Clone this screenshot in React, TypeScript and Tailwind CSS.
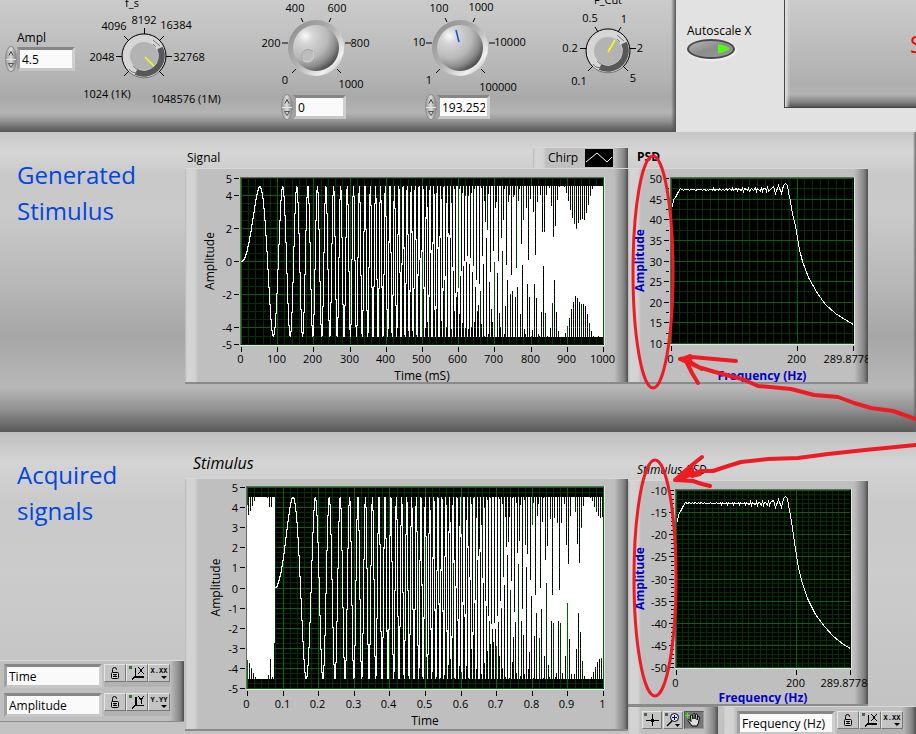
import { useState } from "react"
import type { ReactNode } from "react"
import clsx from "clsx"

type Point = [number, number]
type Tick = { v: number; label: string }

const F_STOP = 193.252
const AMPLITUDE = 4.5

const FRAME =
  "bg-[linear-gradient(to_right,#b8b8b8_0,#d4d4d4_2px,#d2d2d2_10px,#bfbfbf_13px,#bfbfbf_calc(100%_-_14px),#858585_calc(100%_-_4px),#4e4e4e_100%)]"

// linear sweep from 0 to F_STOP over one second, looped after the delay
const sweepTime = (x: number, delay: number) => (Math.max(0, x) - delay + 1) % 1
const chirp = (t: number) => AMPLITUDE * Math.sin(Math.PI * F_STOP * t * t)

// lowest and highest value around every pixel column,
// neighbours overlap more as the sweep gets close to one cycle per two columns
function columns(delay: number, width: number) {
  const steps = 32
  return Array.from({ length: width }, (_, c) => {
    const span = 1 + 0.48 * Math.pow(sweepTime(c / width, delay), 6)
    let low = Infinity
    let high = -Infinity
    for (let s = 0; s <= steps; s++) {
      const v = chirp(sweepTime((c - span / 2 + (s / steps) * span) / width, delay))
      low = Math.min(low, v)
      high = Math.max(high, v)
    }
    return [low, high]
  })
}

// power density in dB below the pass band level
function density(level: number): Point[] {
  const points: Point[] = [
    [1, level - 4.3],
    [3, level - 2.5],
    [7, level - 1.8],
    [11, level - 0.5],
    [15, level + 0.2],
  ]
  for (let f = 19; f < 160; f += 2) {
    const ripple = 0.12 + Math.pow(f / 160, 3) * 0.6
    points.push([f, level + ripple * Math.sin(f * 1.9)])
  }
  const tail: Point[] = [
    [162, 0.7], [165, -0.9], [170, 0.9], [175, -0.9], [179, 1], [182, 1.5], [185, 1.1],
    [187, -0.6], [190, -2.8], [193, -5.8], [197, -8.8], [200, -11.8], [204, -14.6],
    [209, -17.4], [219, -21.4], [232, -25.1], [246, -27.8], [262, -30], [278, -31.8], [289.8, -32.8],
  ]
  return [...points, ...tail.map(([f, d]): Point => [f, level + d])]
}

const range = (from: number, to: number, step: number) =>
  Array.from({ length: Math.round((to - from) / step) + 1 }, (_, i) => from + i * step)

const ticks = (from: number, to: number, step: number): Tick[] =>
  range(from, to, step).map((v) => ({ v, label: String(Math.round(v * 10) / 10) }))

type ChartProps = {
  name: string
  width: number
  height: number
  plot: { x: number; y: number; w: number; h: number }
  xMax: number
  yMin: number
  yMax: number
  xTicks: Tick[]
  yTicks: Tick[]
  xMajor: number
  yMajor: number
  xMinor: number
  yMinor: number
  minorTicks?: boolean
  points?: Point[]
  chirpDelay?: number
  xLabel: string
  xLabelY: number
  tickLabelY: number
  yLabelX: number
  blue?: boolean
}

function Chart(p: ChartProps) {
  const { plot } = p
  const px = (v: number) => Math.round(plot.x + (v / p.xMax) * plot.w) + 0.5
  const row = (v: number) => Math.round(plot.y + ((p.yMax - v) / (p.yMax - p.yMin)) * plot.h)
  const py = (v: number) => row(v) + 0.5
  const bottom = plot.y + plot.h
  const right = plot.x + plot.w
  const xGrid = range(0, Math.floor(p.xMax / p.xMinor) * p.xMinor, p.xMinor)
  const yGrid = range(p.yMin, p.yMax, p.yMinor)
  const isMajor = (v: number, step: number) => Math.abs(v / step - Math.round(v / step)) < 0.001
  const lines = (major: boolean) =>
    xGrid
      .filter((v) => isMajor(v, p.xMajor) === major)
      .map((v) => `M${px(v)} ${plot.y}V${bottom}`)
      .concat(yGrid.filter((v) => isMajor(v, p.yMajor) === major).map((v) => `M${plot.x} ${py(v)}H${right}`))
      .join("")
  const centerY = plot.y + plot.h / 2

  return (
    <svg
      viewBox={`0 0 ${p.width} ${p.height}`}
      className="block h-auto w-full text-[11px]"
      role="img"
      aria-label={p.name}
    >
      <g shapeRendering="crispEdges" fill="none">
        <rect x={plot.x - 1} y={plot.y - 1} width={plot.w + 3} height={plot.h + 3} fill="#e2e2e2" />
        <path d={`M${plot.x - 1} ${plot.y - 1}h${plot.w + 2}v1h${-plot.w - 1}v${plot.h + 1}h-1z`} fill="#666" />
        <rect x={plot.x} y={plot.y} width={plot.w + 1} height={plot.h + 1} fill="#000" />
        <path d={lines(false)} stroke="#003200" />
        <path d={lines(true)} stroke="#006600" />
        {p.chirpDelay !== undefined && (
          <path
            d={columns(p.chirpDelay, plot.w)
              .map(([low, high], c) => `M${plot.x + c + 0.5} ${row(high)}V${row(low) + 1}`)
              .join("")}
            stroke="#fff"
          />
        )}
        {p.points && <polyline points={p.points.map(([x, y]) => `${px(x)},${py(y)}`).join(" ")} stroke="#fff" />}
        <path
          stroke="#000"
          d={
            p.xTicks.map((t) => `M${px(t.v)} ${bottom + 3}v5`).join("") +
            p.yTicks.map((t) => `M${plot.x - 7} ${py(t.v)}h5`).join("") +
            (p.minorTicks ? yGrid.map((v) => `M${plot.x - 5} ${py(v)}h3`).join("") : "")
          }
        />
      </g>
      <g dominantBaseline="central">
        {p.yTicks.map((t) => (
          <text key={t.v} x={plot.x - 9} y={py(t.v)} textAnchor="end">
            {t.label}
          </text>
        ))}
        {p.xTicks.map((t) => (
          <text
            key={t.v}
            x={t.label.length > 6 ? px(t.v) - 30 : px(t.v) - 1}
            y={p.tickLabelY}
            textAnchor={t.label.length > 6 ? "start" : "middle"}
          >
            {t.label}
          </text>
        ))}
        <g textAnchor="middle" className={p.blue ? "fill-[#0000c8] text-[12px] font-bold" : "text-[12px]"}>
          <text x={plot.x + plot.w / 2} y={p.xLabelY}>
            {p.xLabel}
          </text>
          <text transform={`translate(${p.yLabelX} ${centerY}) rotate(-90)`}>Amplitude</text>
        </g>
      </g>
    </svg>
  )
}

function ChartFrame({ children }: { children: ReactNode }) {
  return <div className={clsx("border-t border-b-2 border-t-[#d8d8d8] border-b-[#8a8a8a]", FRAME)}>{children}</div>
}

function Spinner({ onStep, name }: { onStep: (d: number) => void; name: string }) {
  return (
    <div className="flex h-[26px] w-3 flex-col divide-y divide-[#e8e8e8] overflow-hidden rounded-[50%] border border-[#8c8c8c] bg-linear-to-r from-[#a0a0a0] via-[#dcdcdc] to-[#828282]">
      <button type="button" aria-label={`Increase ${name}`} onClick={() => onStep(1)} className="flex-1">
        <svg viewBox="0 0 10 12" className="mx-auto h-3 w-2.5" fill="none">
          <path d="M3 8.500l2-4 2 4" stroke="#444" />
        </svg>
      </button>
      <button type="button" aria-label={`Decrease ${name}`} onClick={() => onStep(-1)} className="flex-1">
        <svg viewBox="0 0 10 12" className="mx-auto h-3 w-2.5" fill="none">
          <path d="M2.500 3.500h5l-2.500 4z" stroke="#555" />
        </svg>
      </button>
    </div>
  )
}

const FIELD =
  "border-[3px] border-t-[#868686] border-r-[#cfcfcf] border-b-[#c6c6c6] border-l-[#a0a0a0] bg-[#fafafa] px-0.5 text-[12px] leading-4 outline-none"

function NumberField({ id, initial, name, wide }: { id: string; initial: string; name: string; wide?: boolean }) {
  const [value, setValue] = useState(initial)
  return (
    <div className="flex items-center">
      <Spinner name={name} onStep={(d) => setValue(String(Number((Number(value) + d).toFixed(3))))} />
      <input
        id={id}
        aria-label={name}
        value={value}
        onChange={(e) => setValue(e.target.value)}
        className={clsx(FIELD, "h-6", wide ? "w-[58px]" : "w-[53px]")}
      />
    </div>
  )
}

type Label = [string, number, number]

function KnobLabels({ labels }: { labels: Label[] }) {
  return (
    <g textAnchor="middle" dominantBaseline="central">
      {labels.map(([text, x, y]) => (
        <text key={text} x={x} y={y}>
          {text}
        </text>
      ))}
    </g>
  )
}

// flat dial with a dark crescent and a yellow pointer, centred on 0,0
function DialFace({ pointer, tickMarks }: { pointer: string; tickMarks: string }) {
  return (
    <g fill="none">
      <circle r="21.500" fill="#d6d6d6" />
      <path d="M16-8A18 18 0 0 1-8 16" stroke="#585858" strokeWidth="6" />
      <path d="M9-16l7 6M12-9l-3-3M-15 13q2 4 8 4M-11 10q3 3 6 4" stroke="#777" />
      <path d="M-15.500 15.500A22 22 0 0 0 15.500 15.500" stroke="#777" />
      <path d="M-15.500 15.500A22 22 0 1 1 15.500 15.500" stroke="#000" />
      <circle r="14" fill="#b3b3b3" />
      <path d={pointer} stroke="#ffff00" strokeWidth="1.500" />
      <path d={tickMarks} stroke="#000" />
    </g>
  )
}

function BallFace({ children }: { children: ReactNode }) {
  return (
    <>
      <defs>
        <linearGradient id="rim" x1="0.1" y1="0.1" x2="0.9" y2="0.9">
          <stop offset="0" stopColor="#909090" />
          <stop offset="0.5" stopColor="#b4b4b4" />
          <stop offset="0.85" stopColor="#f0f0f0" />
          <stop offset="1" stopColor="#c4c4c4" />
        </linearGradient>
        <radialGradient id="ball" cx="0.27" cy="0.24" r="0.82">
          <stop offset="0" stopColor="#fafafa" />
          <stop offset="0.2" stopColor="#d6d6d6" />
          <stop offset="0.6" stopColor="#b8b8b8" />
          <stop offset="0.82" stopColor="#8c8c8c" />
          <stop offset="1" stopColor="#505050" />
        </radialGradient>
      </defs>
      <circle r="28" fill="url(#rim)" />
      <circle r="23" fill="url(#ball)" />
      {children}
      <path d="M-24 25l4-4M-34-5h6M-15-30l2 4M15-30l-2 4M29-5h6M25 25l-4-4" stroke="#000" />
    </>
  )
}

function LockIcon() {
  return (
    <svg viewBox="0 0 16 16" className="size-4" fill="none" stroke="#000">
      <path d="M5.500 7V4.500a2 2 0 0 1 4 0V5" />
      <rect x="4.500" y="7.500" width="7" height="6" rx="1" fill="#d0d0d0" />
      <path d="M6 9.500h4M6 11.500h4M8 9v3" />
    </svg>
  )
}

function ScaleIcon({ axis }: { axis: "X" | "Y" }) {
  return (
    <svg viewBox="0 0 18 16" className="h-4 w-[18px]" fill="none" stroke="#000" shapeRendering="crispEdges">
      <rect x="1" y="1" width="3" height="3" fill="#3f6b3f" stroke="none" />
      <path d="M7.500 3v9M4 14.500l3-3" />
      <path d="M7 11.500h9" strokeWidth={axis === "X" ? 2 : 1} />
      {axis === "Y" && <path d="M8.500 3v8" />}
      <path d={axis === "X" ? "M10.500 2l5 7M15.500 2l-5 7" : "M10.500 2l2.500 4 2.500-4M13.500 5v5"} />
    </svg>
  )
}

function FormatIcon({ axis }: { axis: "X" | "Y" }) {
  return (
    <svg viewBox="0 0 18 16" className="h-4 w-[18px]">
      <text x="9" y="8" textAnchor="middle" className="font-['Liberation_Mono',monospace] text-[7px] font-bold">
        {axis === "X" ? "X.XX" : "Y.YY"}
      </text>
      <path d="M11 11h6l-3 3z" />
    </svg>
  )
}

type ToolButtonProps = { label: string; active?: boolean; narrow?: boolean; children: ReactNode }

function ToolButton({ label, active, narrow, children }: ToolButtonProps) {
  return (
    <button
      type="button"
      aria-label={label}
      className={clsx(
        "flex h-[18px] items-center justify-center border",
        narrow ? "w-5" : "w-[22px]",
        active
          ? "border-t-[#555] border-r-[#999] border-b-[#999] border-l-[#555] bg-[#777]"
          : "border-t-[#e6e6e6] border-r-[#777] border-b-[#777] border-l-[#e6e6e6] bg-[#c4c4c4]"
      )}
    >
      {children}
    </button>
  )
}

function ScaleLegend({ axis, id, name }: { axis: "X" | "Y"; id: string; name: string }) {
  return (
    <div className="flex items-start">
      <input id={id} aria-label={`${axis} scale name`} defaultValue={name} className={clsx(FIELD, "mr-0.5 h-6 w-[98px]")} />
      <div className="flex h-[23px] items-start bg-[#b2b2b2]">
        <ToolButton label={`Lock ${axis} autoscale`}>
          <LockIcon />
        </ToolButton>
        <ToolButton label={`Autoscale ${axis} once`}>
          <ScaleIcon axis={axis} />
        </ToolButton>
        <ToolButton label={`${axis} scale format`}>
          <FormatIcon axis={axis} />
        </ToolButton>
      </div>
    </div>
  )
}

function GraphTools() {
  return (
    <div className={clsx("flex w-[90px] gap-px border-t border-[#8a8a8a] pt-1 pl-[14px]", FRAME)}>
      <ToolButton label="Cursor" narrow>
        <svg viewBox="0 0 18 16" className="h-4 w-[18px]" stroke="#000" shapeRendering="crispEdges">
          <rect x="1" y="1" width="3" height="3" fill="#3f6b3f" stroke="none" />
          <path d="M9.500 2v12M3 8.500h13M8 7.500h3M8 9.500h3" />
        </svg>
      </ToolButton>
      <ToolButton label="Zoom" narrow>
        <svg viewBox="0 0 18 16" className="h-4 w-[18px]" fill="none" stroke="#000">
          <rect x="1" y="1" width="3" height="3" fill="#3f6b3f" stroke="none" />
          <circle cx="10.500" cy="5.500" r="4" fill="#e8e8ff" />
          <path d="M8 5.500h5M10.500 3v5" stroke="#00a" />
          <path d="M8 9l-5 5" strokeWidth="1.500" />
          <path d="M11 12h5l-2.500 3z" fill="#000" stroke="none" />
        </svg>
      </ToolButton>
      <ToolButton label="Pan" active narrow>
        <svg viewBox="0 0 18 16" className="h-4 w-[18px]" fill="#ddd" stroke="#000">
          <path d="M7 14L3 8.500c0-1.500 1.500-1 3 1L5.500 4c0-1.500 1.500-1.500 2 0L8 7V2.500c0-1.500 2-1.500 2 0V7l.5-4c.2-1.500 2-1 2 0L12 8l1-3c.4-1 2-.5 1.500.5L13.500 11 12 14z" />
          <path d="M0 3.500h5M2.500 1v5" stroke="#3f0" />
        </svg>
      </ToolButton>
    </div>
  )
}

function Controls() {
  return (
    <div className="flex h-[132px] overflow-hidden bg-[linear-gradient(to_right,transparent_calc(100%_-_5px),#555_100%),linear-gradient(to_bottom,#cbcbcb_0,#c4c4c4_25px,#b4b4b4_75px,#a9a9a9_98px,#b4b4b4_113px,#989898_120px,#585858_131px)]">
      <div className="w-20 shrink-0 pt-[30px] pl-[5px]">
        <label htmlFor="ampl" className="block pl-3 text-[12px] leading-4">
          Ampl
        </label>
        <NumberField id="ampl" name="Ampl" initial="4.5" wide />
      </div>
      <svg viewBox="80 0 150 132" className="h-[132px] w-[150px] shrink-0 text-[11px]" role="img" aria-label="f_s knob">
        <g transform="translate(144 56)">
          <DialFace
            pointer="M1 1l9 9"
            tickMarks="M-20 20l5-5M-28 .5h6M-20-20l5 5M.5-28v6M20-20l-5 5M22 .5h6M20 20l-5-5"
          />
        </g>
        <KnobLabels
          labels={[
            ["f_s", 132, 2],
            ["1024 (1K)", 107, 93],
            ["2048", 102, 56],
            ["4096", 114, 25],
            ["8192", 144, 19],
            ["16384", 176, 24],
            ["32768", 189, 56],
            ["1048576 (1M)", 186, 98],
          ]}
        />
      </svg>
      <div className="w-[150px] shrink-0">
        <svg viewBox="230 0 150 94" className="block h-[94px] w-full text-[11px]" role="img" aria-label="Start frequency knob">
          <g transform="translate(316 48)">
            <BallFace>
              <circle cx="-8" cy="8" r="6.500" fill="#bdbdbd" stroke="#a6a6a6" />
              <path d="M-3 4a6.500 6.500 0 0 1-10 8" fill="none" stroke="#dadada" />
            </BallFace>
          </g>
          <KnobLabels
            labels={[
              ["400", 295, 7],
              ["600", 337, 7],
              ["200", 271, 42],
              ["800", 360, 42],
              ["0", 285, 79],
              ["1000", 351, 83],
            ]}
          />
        </svg>
        <div className="pl-[51px]">
          <NumberField id="f-start" name="Start frequency" initial="0" />
        </div>
      </div>
      <div className="w-[150px] shrink-0">
        <svg viewBox="380 0 150 94" className="block h-[94px] w-full text-[11px]" role="img" aria-label="Stop frequency knob">
          <g transform="translate(460 48)">
            <BallFace>
              <path d="M-4-18l3 12" stroke="#1450e0" strokeWidth="1.500" />
            </BallFace>
          </g>
          <KnobLabels
            labels={[
              ["100", 439, 7],
              ["1000", 481, 6],
              ["10", 419, 41],
              ["10000", 510, 41],
              ["1", 429, 79],
              ["100000", 498, 86],
            ]}
          />
        </svg>
        <div className="pl-[45px]">
          <NumberField id="f-stop" name="Stop frequency" initial="193.252" />
        </div>
      </div>
      <svg viewBox="530 0 140 132" className="h-[132px] w-[140px] shrink-0 text-[11px]" role="img" aria-label="F_Cut knob">
        <g transform="translate(608 51)">
          <DialFace pointer="M0 1l7-12" tickMarks="M-20 20l5-5M-28-2.500h6M-13-24l3 5M13-24l-3 5M22-2.500h6M20 20l-5-5" />
        </g>
        <KnobLabels
          labels={[
            ["F_Cut", 608, -1],
            ["0.5", 590, 17],
            ["1", 624, 18],
            ["0.2", 570, 47],
            ["2", 640, 47],
            ["0.1", 579, 80],
            ["5", 633, 77],
          ]}
        />
      </svg>
    </div>
  )
}

function Autoscale() {
  const [on, setOn] = useState(true)
  return (
    <div className="flex justify-between bg-[#e2e2e2]">
      <div className="pt-[23px] pl-[11px]">
        <span id="autoscale" className="block text-[12px] leading-4 whitespace-nowrap">
          Autoscale X
        </span>
        <button
          type="button"
          role="switch"
          aria-checked={on}
          aria-labelledby="autoscale"
          onClick={() => setOn(!on)}
          className="flex h-5 w-12 items-center justify-end rounded-[50%] border-2 border-[#4a4a4a] bg-linear-to-br from-[#b8b8b8] via-[#8c8c8c] to-[#999] pr-0.5 shadow-[1px_1px_3px_#fff]"
        >
          <svg viewBox="0 0 14 12" className="h-3 w-3.5">
            <path d="M1 1.500q6 0 12 4-5 4-12 5z" fill={on ? "#55f814" : "#666"} />
          </svg>
        </button>
      </div>
      <div className="h-[108px] w-[132px] overflow-hidden border-b border-l border-[#444] bg-[linear-gradient(to_right,#e2e2e2_0,transparent_5px),linear-gradient(to_bottom,#cbcbcb_0,#c0c0c0_35px,#aeaeae_85px,#b4b4b4_94px,#848484_102px,#555_107px)] pt-[26px] pl-[125px]">
        <span className="text-[24px] leading-9 text-[#f80000]">S</span>
      </div>
    </div>
  )
}

function SectionTitle({ children }: { children: ReactNode }) {
  return <h2 className="pt-[25px] pl-[17px] text-[24px] leading-9 text-[#0046e0]">{children}</h2>
}

// pen marks drawn over the front panel
function Annotations() {
  return (
    <svg
      viewBox="0 0 916 734"
      className="pointer-events-none absolute inset-x-0 top-0 h-auto w-full"
      fill="none"
      stroke="#ed1c24"
      strokeLinejoin="round"
      strokeLinecap="round"
      strokeWidth="4"
      aria-hidden="true"
    >
      <ellipse cx="653" cy="272" rx="20" ry="116" strokeWidth="3" />
      <ellipse cx="655" cy="578" rx="21" ry="118" strokeWidth="3" />
      <path d="M916 419l-23-8-22-3-17-5-16-6-24-2-23-6-33-3-16-7-27-7-17-5-18-8M680 359l12-2 44 4M686 361l6 12 6 10M682 359l8-3v6l12 7" />
      <path d="M916 445l-51 5-37 4-30 4-30 1-27 3-13 4-15 5h-12l-25 9M702 457l-10 8-17 15 18 1 9 3 8 2M678 479l14-10v7l8-2" />
    </svg>
  )
}

export default function App() {
  const frequencyTicks: Tick[] = [
    { v: 0, label: "0" },
    { v: 200, label: "200" },
  ]

  return (
    <main className="relative overflow-hidden bg-[#c4c4c4] font-['Open_Sans','Noto_Sans',sans-serif] text-black">
      <div className="grid grid-cols-[676fr_240fr]">
        <Controls />
        <Autoscale />
      </div>

      <section className="grid min-h-[300px] grid-cols-[185fr_443fr_240fr_48fr] bg-[linear-gradient(to_right,transparent_calc(100%_-_3px),#666_100%),linear-gradient(to_bottom,#c6c6c6_0,#d6d6d6_20px,#c8c8c8_45px,#cacaca_80px,#b8b8b8_150px,#a6a6a6_205px,#b8b8b8_255px,#909090_278px,#585858_300px)]">
        <SectionTitle>
          Generated
          <br />
          Stimulus
        </SectionTitle>
        <div>
          <div className="flex h-9 items-end justify-between pl-0.5">
            <h3 className="pb-0.5 text-[12px] leading-4">Signal</h3>
            <div className={clsx("flex h-[21px] w-[95px] items-center gap-2 border-t border-[#d8d8d8] pl-[15px] text-[12px]", FRAME)}>
              <span className="w-[29px]">Chirp</span>
              <svg viewBox="0 0 28 18" className="h-[18px] w-7 shrink-0" fill="none">
                <path d="M0 0h28v18H0z" fill="#000" />
                <path d="M1 13l11-9 10 9 5-5" stroke="#fff" />
              </svg>
            </div>
          </div>
          <ChartFrame>
            <Chart
              name="Generated signal"
              width={443}
              height={213}
              plot={{ x: 56, y: 9, w: 362, h: 166 }}
              xMax={1}
              yMin={-5}
              yMax={5}
              xTicks={range(0, 10, 1).map((v) => ({ v: v / 10, label: String(v * 100) }))}
              yTicks={[5, 4, 2, 0, -2, -4, -5].map((v) => ({ v, label: String(v) }))}
              xMajor={0.1}
              yMajor={2}
              xMinor={0.02}
              yMinor={0.5}
              chirpDelay={0}
              xLabel="Time (mS)"
              xLabelY={206}
              tickLabelY={189}
              yLabelX={24}
            />
          </ChartFrame>
        </div>
        <div>
          <h3 className="h-9 pt-4 pl-[9px] text-[12px] leading-[18px] font-bold">PSD</h3>
          <ChartFrame>
            <Chart
              name="PSD"
              width={240}
              height={213}
              plot={{ x: 43, y: 9, w: 182, h: 165 }}
              xMax={289.8778}
              yMin={10}
              yMax={50}
              xTicks={[...frequencyTicks, { v: 289.8778, label: "289.8778" }]}
              yTicks={ticks(10, 50, 5)}
              xMajor={200}
              yMajor={5}
              xMinor={12.5}
              yMinor={2.5}
              minorTicks
              points={density(47.3)}
              xLabel="Frequency (Hz)"
              xLabelY={206}
              tickLabelY={189}
              yLabelX={11}
              blue
            />
          </ChartFrame>
        </div>
      </section>

      <section className="grid min-h-[302px] grid-cols-[185fr_443fr_288fr] bg-[linear-gradient(to_bottom,#bebebe_0,#d4d4d4_30px,#c9c9c9_75px,#cccccc_140px,#c6c6c6_220px,#c2c2c2_302px)]">
        <div className="flex flex-col">
          <SectionTitle>
            Acquired
            <br />
            signals
          </SectionTitle>
          <div className="mt-auto mr-px mb-3 flex flex-col gap-[5px] border-t border-b border-t-[#dadada] border-b-[#8a8a8a] bg-[linear-gradient(to_right,#bfbfbf_calc(100%_-_14px),#858585_calc(100%_-_4px),#4e4e4e_100%)] pt-[3px] pb-1 pl-1">
            <ScaleLegend axis="X" id="time-name" name="Time" />
            <ScaleLegend axis="Y" id="amplitude-name" name="Amplitude" />
          </div>
        </div>
        <div>
          <h3 className="h-[46px] pt-[19px] pl-2 text-[16px] leading-6 italic">Stimulus</h3>
          <ChartFrame>
            <Chart
              name="Acquired stimulus"
              width={443}
              height={250}
              plot={{ x: 62, y: 8, w: 356, h: 201 }}
              xMax={1}
              yMin={-5}
              yMax={5}
              xTicks={ticks(0, 1, 0.1)}
              yTicks={ticks(-5, 5, 1)}
              xMajor={0.1}
              yMajor={1}
              xMinor={0.02}
              yMinor={0.25}
              chirpDelay={0.077}
              xLabel="Time"
              xLabelY={241}
              tickLabelY={224}
              yLabelX={30}
            />
          </ChartFrame>
        </div>
        <div>
          <h3 className="h-12 pt-[29px] pl-[9px] text-[12px] leading-[18px] italic">Stimulus PSD</h3>
          <div className="w-5/6">
            <ChartFrame>
              <Chart
                name="Stimulus PSD"
                width={240}
                height={223}
                plot={{ x: 48, y: 9, w: 174, h: 177 }}
                xMax={289.87786}
                yMin={-50}
                yMax={-10}
                xTicks={[...frequencyTicks, { v: 289.87786, label: "289.87786" }]}
                yTicks={ticks(-50, -10, 5)}
                xMajor={200}
                yMajor={5}
                xMinor={10}
                yMinor={1}
                minorTicks
                points={density(-12.9)}
                xLabel="Frequency (Hz)"
                xLabelY={216}
                tickLabelY={201}
                yLabelX={11}
                blue
              />
            </ChartFrame>
          </div>
          <div className="flex h-7 justify-between overflow-hidden">
            <GraphTools />
            <div className={clsx("w-[193px] border-t border-[#d8d8d8] pt-1 pl-[14px]", FRAME)}>
              <ScaleLegend axis="X" id="frequency-name" name="Frequency (Hz)" />
            </div>
          </div>
        </div>
      </section>

      <Annotations />
    </main>
  )
}
